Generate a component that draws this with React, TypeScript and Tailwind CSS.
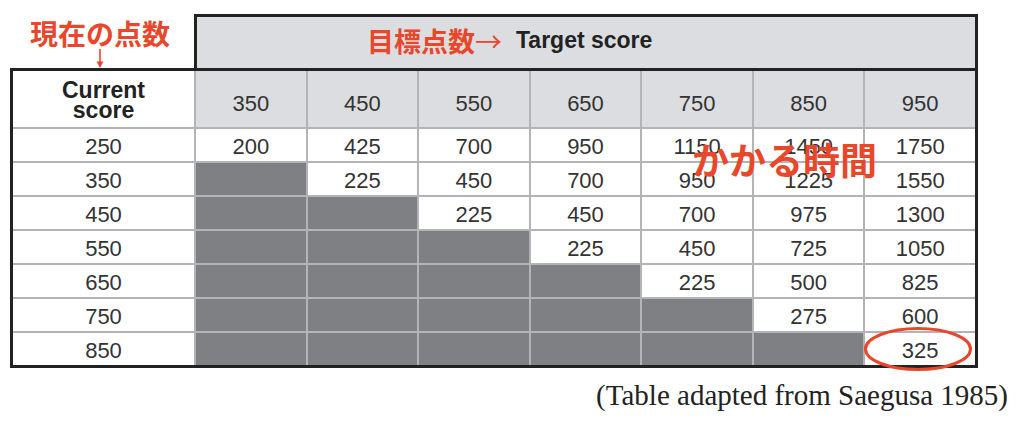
const TARGETS = [350, 450, 550, 650, 750, 850, 950]

// null = 塗りつぶしセル
const ROWS: { current: number; hours: (number | null)[] }[] = [
  { current: 250, hours: [200, 425, 700, 950, 1150, 1450, 1750] },
  { current: 350, hours: [null, 225, 450, 700, 950, 1225, 1550] },
  { current: 450, hours: [null, null, 225, 450, 700, 975, 1300] },
  { current: 550, hours: [null, null, null, 225, 450, 725, 1050] },
  { current: 650, hours: [null, null, null, null, 225, 500, 825] },
  { current: 750, hours: [null, null, null, null, null, 275, 600] },
  { current: 850, hours: [null, null, null, null, null, null, 325] },
]

const sans = "font-['Liberation_Sans',Arial,sans-serif]"
const jp = "font-['Noto_Sans_CJK_JP','Noto_Sans',sans-serif]"

export default function App() {
  return (
    <div className="relative w-[1024px] h-[423px] bg-white overflow-hidden">
      <div className="pl-[10px] pt-[14px] w-[978px]">
        {/* ── 上段: ラベル + Target score ヘッダー ── */}
        <div className="flex h-[54px]">
          <div className="w-[184px] flex">
            <div className="ml-[20px] w-[140px] flex flex-col items-center">
              <span className={`${jp} mt-[5px] text-[28px] leading-none font-bold text-[#e8472b] whitespace-nowrap`}>
                現在の点数
              </span>
              <svg width="12" height="19" viewBox="0 0 12 19" className="mt-auto" aria-hidden="true">
                <line x1="6" y1="0" x2="6" y2="17" stroke="#e8472b" strokeWidth="1.6" />
                <path d="M2.5 12.5 L6 19 L9.5 12.5 Z" fill="#e8472b" />
              </svg>
            </div>
          </div>
          <div className="flex-1 border-[3px] border-b-0 border-[#222] bg-[#dcdde0] flex items-center pl-[170px] pb-[4px]">
            <span className={`${jp} text-[27px] leading-none font-bold text-[#e8472b]`}>目標点数</span>
            <span className={`${jp} text-[27px] leading-none text-[#e8472b]`}>→</span>
            <span className={`${sans} ml-[14px] text-[23px] leading-none font-bold text-[#222]`}>Target score</span>
          </div>
        </div>

        {/* ── テーブル本体 ── */}
        <div className="border-[3px] border-[#222]">
          <div className="grid grid-cols-[181px_repeat(7,1fr)] grid-rows-[56px_repeat(7,32px)] gap-[2px] bg-[#b3b4b7]">
            <div className={`${sans} bg-white flex flex-col items-center justify-center pt-[2px] text-[23px] leading-[20px] font-bold text-[#222]`}>
              <span>Current</span>
              <span>score</span>
            </div>
            {TARGETS.map((t) => (
              <div key={t} className={`${sans} bg-[#dcdde0] flex items-center justify-center pt-[9px] text-[22px] text-[#333]`}>
                {t}
              </div>
            ))}
            {ROWS.map((r) => (
              <div key={r.current} className="contents">
                <div className={`${sans} bg-white flex items-center justify-center pt-[3px] text-[22px] text-[#333]`}>
                  {r.current}
                </div>
                {r.hours.map((h, i) =>
                  h === null ? (
                    <div key={i} className="bg-[#7f8084]" />
                  ) : (
                    <div key={i} className={`${sans} bg-white flex items-center justify-center pt-[3px] text-[22px] text-[#333]`}>
                      {h}
                    </div>
                  )
                )}
              </div>
            ))}
          </div>
        </div>
      </div>

      <p className="mt-[13px] pr-[16px] text-right font-['Liberation_Serif','Times_New_Roman',serif] text-[29px] leading-none text-[#222]">
        (Table adapted from Saegusa 1985)
      </p>

      {/* 注釈: かかる時間 */}
      <span className={`${jp} absolute left-[692px] top-[141px] text-[37px] leading-none font-bold text-[#e8472b] whitespace-nowrap`}>
        かかる時間
      </span>

      {/* 325 を囲む楕円 */}
      <svg className="absolute left-[863px] top-[326px]" width="110" height="46" viewBox="0 0 110 46" aria-hidden="true">
        <ellipse cx="55" cy="23" rx="52.5" ry="20.5" fill="none" stroke="#e8472b" strokeWidth="3" />
      </svg>
    </div>
  )
}
